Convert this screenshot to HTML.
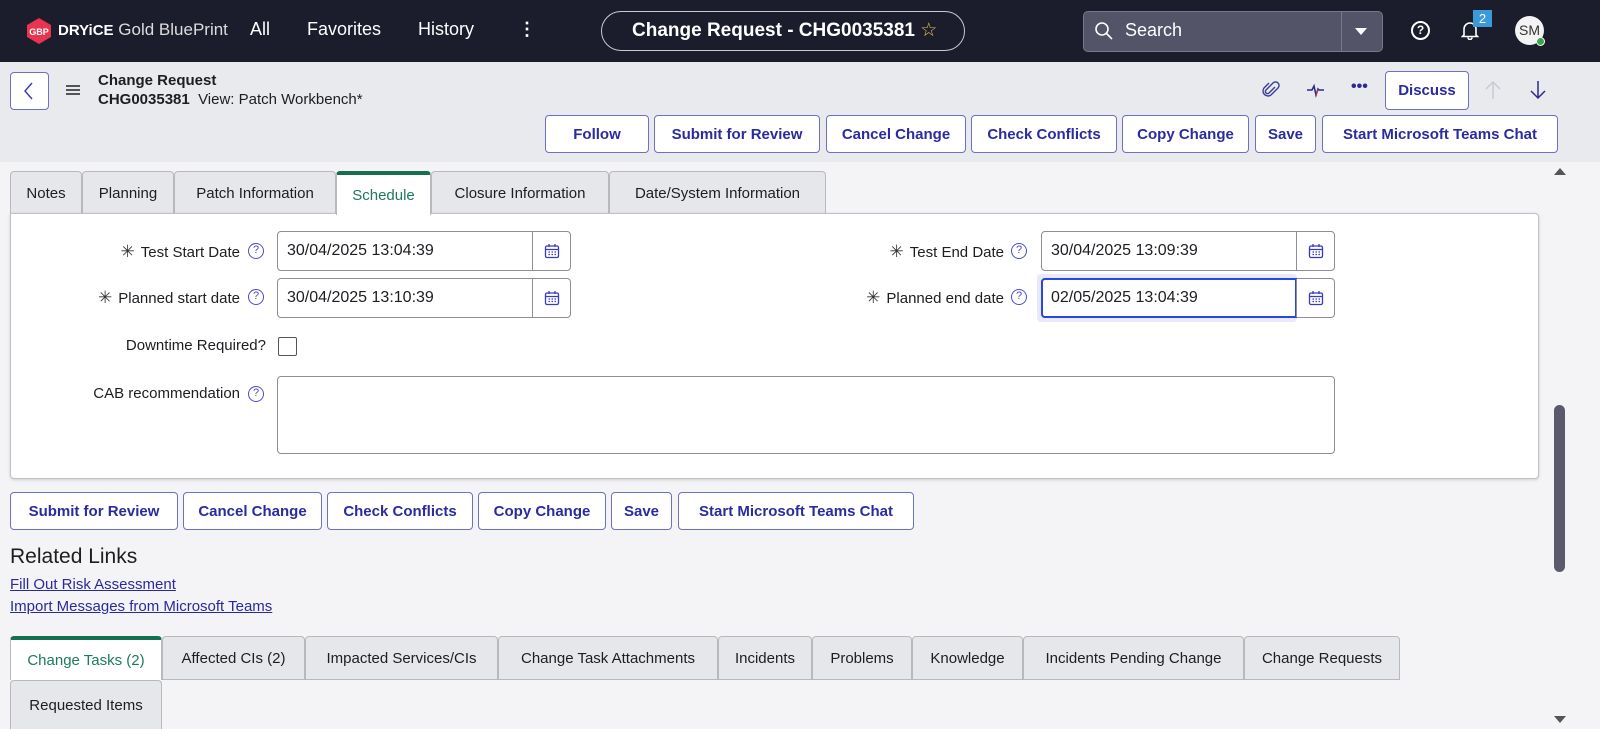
<!DOCTYPE html>
<html><head><meta charset="utf-8">
<style>
*{box-sizing:border-box;margin:0;padding:0}
body{width:1600px;height:729px;overflow:hidden;background:#f4f4f6;font-family:"Liberation Sans",sans-serif;font-size:15px;color:#1d1d22;position:relative}
.abs{position:absolute}
.top{left:0;top:0;width:1600px;height:62px;background:#1b1c2c}
.nav{color:#fff;font-size:18px;top:19px}
.hdr{left:0;top:62px;width:1600px;height:100px;background:#e9eaee}
.btn{position:absolute;height:38px;border:1px solid #6f6fc8;border-radius:4px;background:#fff;color:#2b2ba0;font-weight:bold;font-size:15px;display:flex;align-items:center;justify-content:center;white-space:nowrap}
.tab{position:absolute;height:43px;border:1px solid #b8b9bf;border-bottom:none;border-radius:4px 4px 0 0;background:#e6e7eb;display:flex;align-items:center;justify-content:center;font-size:15px;color:#1d1d22;white-space:nowrap}
.tab.on{background:#fff;color:#1c7a5a;border-top:4px solid #167050}
.lbl{position:absolute;font-size:15px;text-align:right;white-space:nowrap}
.star{color:#333;font-size:17px;margin-right:6px}
.help{position:absolute;width:16px;height:16px;border:1.5px solid #4b4bd0;border-radius:50%;color:#4b4bd0;font-size:11px;line-height:13px;text-align:center}
.inp{position:absolute;height:40px;border:1px solid #8d8e96;border-radius:4px;background:#fff;font-size:16px;padding-left:9px;line-height:38px}
.cal{position:absolute;right:0;top:0;width:38px;height:100%;border-left:1px solid #8d8e96;display:flex;align-items:center;justify-content:center}
a{color:#2a2aa0;text-decoration:underline}
</style></head><body>
<div class="abs top"></div>
<svg class="abs" style="left:25px;top:17px" width="28" height="28" viewBox="0 0 28 28"><polygon points="14,1 26,8 26,20 14,27 2,20 2,8" fill="#e8344e"/><text x="14" y="18" font-size="9" font-weight="bold" fill="#fff" text-anchor="middle" font-family="Liberation Sans">GBP</text></svg>
<div class="abs" style="left:58px;top:20px;color:#fff;font-size:17px;white-space:nowrap"><b style="font-size:15px">DRYiCE</b> <span style="color:#ddd">Gold BluePrint</span></div>
<div class="abs nav" style="left:250px">All</div>
<div class="abs nav" style="left:307px">Favorites</div>
<div class="abs nav" style="left:418px">History</div>
<div class="abs nav" style="left:518px;font-weight:bold">⋮</div>
<div class="abs" style="left:601px;top:11px;width:364px;height:40px;border:1.5px solid #c9c9d2;border-radius:20px;color:#fff;font-size:19px;font-weight:bold;line-height:37px;padding-left:30px;white-space:nowrap">Change Request - CHG0035381 <span style="color:#e8c050;font-weight:normal">☆</span></div>
<div class="abs" style="left:1083px;top:11px;width:300px;height:41px;background:#545469;border:1px solid #77788a;border-radius:5px"></div>
<div class="abs" style="left:1341px;top:12px;width:1px;height:39px;background:#77788a"></div>
<svg class="abs" style="left:1094px;top:21px" width="20" height="20" viewBox="0 0 20 20"><circle cx="8" cy="8" r="6" fill="none" stroke="#fff" stroke-width="1.6"/><path d="M12.5 12.5L18 18" stroke="#fff" stroke-width="1.6"/></svg>
<div class="abs" style="left:1125px;top:20px;color:#fff;font-size:18px">Search</div>
<div class="abs" style="left:1355px;top:28px;width:0;height:0;border-left:6px solid transparent;border-right:6px solid transparent;border-top:7px solid #fff"></div>
<div class="abs" style="left:1411px;top:21px;width:19px;height:19px;border:2px solid #fff;border-radius:50%;color:#fff;font-size:12px;font-weight:bold;text-align:center;line-height:15px">?</div>
<svg class="abs" style="left:1461px;top:20px" width="18" height="20" viewBox="0 0 18 20"><path d="M3 15V9a6 6 0 0112 0v6l1.5 1.5h-15z M7 17.5a2 2 0 004 0" fill="none" stroke="#fff" stroke-width="1.6"/></svg>
<div class="abs" style="left:1473px;top:10px;width:19px;height:17px;background:#3b9ad8;color:#fff;font-size:13px;text-align:center;line-height:17px">2</div>
<div class="abs" style="left:1515px;top:16px;width:29px;height:29px;border-radius:50%;background:#f3f3f3;color:#333;font-size:14px;text-align:center;line-height:29px">SM</div>
<div class="abs" style="left:1536px;top:37px;width:9px;height:9px;border-radius:50%;background:#3aa64a;border:1px solid #fff"></div>

<div class="abs hdr"></div>
<div class="abs" style="left:10px;top:72px;width:39px;height:38px;border:1px solid #6f6fc8;border-radius:4px;background:#fff"></div>
<svg class="abs" style="left:22px;top:81px" width="14" height="20" viewBox="0 0 14 20"><path d="M10 2L3 10l7 8" fill="none" stroke="#3a3aa8" stroke-width="1.4"/></svg>
<svg class="abs" style="left:66px;top:84px" width="14" height="12" viewBox="0 0 14 12"><path d="M0 2h14M0 6h14M0 10h14" stroke="#222" stroke-width="1.5"/></svg>
<div class="abs" style="left:98px;top:72px;font-weight:bold;font-size:15px">Change Request</div>
<div class="abs" style="left:98px;top:91px;font-size:15px;white-space:nowrap"><b>CHG0035381</b>&nbsp; View: Patch Workbench*</div>
<svg class="abs" style="left:1262px;top:80px" width="18" height="20" viewBox="0 0 18 20"><path d="M13 7l-6 6a2 2 0 01-3-3l7-7a3.5 3.5 0 015 5l-7 7a5 5 0 01-7-7l5-5" fill="none" stroke="#3a3a9a" stroke-width="1.4"/></svg>
<svg class="abs" style="left:1306px;top:80px" width="20" height="20" viewBox="0 0 20 20"><path d="M1 10h5l2-4 2 9 2-6 1 1h5" fill="none" stroke="#2a2a90" stroke-width="1.6"/><path d="M10 15l2-6" stroke="#c03040" stroke-width="1.2"/></svg>
<div class="abs" style="left:1351px;top:78px;font-size:16px;font-weight:bold;color:#2a2a90">•••</div>
<div class="btn" style="left:1385px;top:71px;width:84px;height:39px">Discuss</div>
<svg class="abs" style="left:1485px;top:80px" width="16" height="20" viewBox="0 0 16 20"><path d="M8 19V2M1 9l7-7 7 7" fill="none" stroke="#c8c9d3" stroke-width="1.5"/></svg>
<svg class="abs" style="left:1530px;top:80px" width="16" height="20" viewBox="0 0 16 20"><path d="M8 1v17M1 11l7 7 7-7" fill="none" stroke="#2a2a90" stroke-width="1.5"/></svg>
<div class="btn" style="left:545px;top:115px;width:104px">Follow</div>
<div class="btn" style="left:654px;top:115px;width:166px">Submit for Review</div>
<div class="btn" style="left:826px;top:115px;width:140px">Cancel Change</div>
<div class="btn" style="left:971px;top:115px;width:146px">Check Conflicts</div>
<div class="btn" style="left:1122px;top:115px;width:127px">Copy Change</div>
<div class="btn" style="left:1255px;top:115px;width:61px">Save</div>
<div class="btn" style="left:1322px;top:115px;width:236px">Start Microsoft Teams Chat</div>

<div class="tab" style="left:10px;top:171px;width:72px">Notes</div>
<div class="tab" style="left:82px;top:171px;width:92px">Planning</div>
<div class="tab" style="left:174px;top:171px;width:162px">Patch Information</div>
<div class="tab on" style="left:336px;top:171px;width:95px;height:44px;z-index:2">Schedule</div>
<div class="tab" style="left:431px;top:171px;width:178px">Closure Information</div>
<div class="tab" style="left:609px;top:171px;width:217px">Date/System Information</div>
<div class="abs" style="left:10px;top:213px;width:1529px;height:266px;background:#fff;border:1px solid #c0c1c8;border-radius:0 4px 4px 4px;box-shadow:0 1px 3px rgba(0,0,0,.15)"></div>

<div class="lbl" style="right:1360px;top:242px"><span class="star">✳</span>Test Start Date</div>
<div class="help" style="left:248px;top:243px">?</div>
<div class="inp" style="left:277px;top:231px;width:294px">30/04/2025 13:04:39<div class="cal"><svg width="16" height="16" viewBox="0 0 16 16"><rect x="1.5" y="3" width="13" height="11.5" rx="1.5" fill="none" stroke="#3a3ac0" stroke-width="1.3"/><path d="M1.5 6.5h13M5 1v3M11 1v3" stroke="#3a3ac0" stroke-width="1.3"/><path d="M4.5 9h1.5M7.5 9h1.5M10.5 9h1.5M4.5 11.5h1.5M7.5 11.5h1.5M10.5 11.5h1.5" stroke="#3a3ac0" stroke-width="1.3"/></svg></div></div>
<div class="lbl" style="right:1360px;top:288px"><span class="star">✳</span>Planned start date</div>
<div class="help" style="left:248px;top:289px">?</div>
<div class="inp" style="left:277px;top:278px;width:294px">30/04/2025 13:10:39<div class="cal"><svg width="16" height="16" viewBox="0 0 16 16"><rect x="1.5" y="3" width="13" height="11.5" rx="1.5" fill="none" stroke="#3a3ac0" stroke-width="1.3"/><path d="M1.5 6.5h13M5 1v3M11 1v3" stroke="#3a3ac0" stroke-width="1.3"/><path d="M4.5 9h1.5M7.5 9h1.5M10.5 9h1.5M4.5 11.5h1.5M7.5 11.5h1.5M10.5 11.5h1.5" stroke="#3a3ac0" stroke-width="1.3"/></svg></div></div>
<div class="lbl" style="right:1334px;top:337px">Downtime Required?</div>
<div class="abs" style="left:278px;top:337px;width:19px;height:19px;border:1px solid #555;border-radius:2px;background:#fff"></div>
<div class="lbl" style="right:1360px;top:385px">CAB recommendation</div>
<div class="help" style="left:248px;top:386px">?</div>
<div class="abs" style="left:277px;top:376px;width:1058px;height:78px;border:1px solid #8d8e96;border-radius:4px;background:#fff"></div>

<div class="lbl" style="right:596px;top:242px"><span class="star">✳</span>Test End Date</div>
<div class="help" style="left:1011px;top:243px">?</div>
<div class="inp" style="left:1041px;top:231px;width:294px">30/04/2025 13:09:39<div class="cal"><svg width="16" height="16" viewBox="0 0 16 16"><rect x="1.5" y="3" width="13" height="11.5" rx="1.5" fill="none" stroke="#3a3ac0" stroke-width="1.3"/><path d="M1.5 6.5h13M5 1v3M11 1v3" stroke="#3a3ac0" stroke-width="1.3"/><path d="M4.5 9h1.5M7.5 9h1.5M10.5 9h1.5M4.5 11.5h1.5M7.5 11.5h1.5M10.5 11.5h1.5" stroke="#3a3ac0" stroke-width="1.3"/></svg></div></div>
<div class="lbl" style="right:596px;top:288px"><span class="star">✳</span>Planned end date</div>
<div class="help" style="left:1011px;top:289px">?</div>
<div class="abs" style="left:1037px;top:274px;width:260px;height:48px;background:#e8eafc;border-radius:4px"></div>
<div class="inp" style="left:1041px;top:278px;width:294px">
<div class="abs" style="left:-1px;top:-1px;width:256px;height:40px;border:2px solid #2848e0;border-radius:4px 0 0 4px"></div>02/05/2025 13:04:39<div class="cal"><svg width="16" height="16" viewBox="0 0 16 16"><rect x="1.5" y="3" width="13" height="11.5" rx="1.5" fill="none" stroke="#3a3ac0" stroke-width="1.3"/><path d="M1.5 6.5h13M5 1v3M11 1v3" stroke="#3a3ac0" stroke-width="1.3"/><path d="M4.5 9h1.5M7.5 9h1.5M10.5 9h1.5M4.5 11.5h1.5M7.5 11.5h1.5M10.5 11.5h1.5" stroke="#3a3ac0" stroke-width="1.3"/></svg></div></div>

<div class="btn" style="left:10px;top:492px;width:168px">Submit for Review</div>
<div class="btn" style="left:183px;top:492px;width:139px">Cancel Change</div>
<div class="btn" style="left:327px;top:492px;width:146px">Check Conflicts</div>
<div class="btn" style="left:478px;top:492px;width:128px">Copy Change</div>
<div class="btn" style="left:611px;top:492px;width:61px">Save</div>
<div class="btn" style="left:678px;top:492px;width:236px">Start Microsoft Teams Chat</div>
<div class="abs" style="left:10px;top:545px;font-size:21px">Related Links</div>
<div class="abs" style="left:10px;top:576px;font-size:15px"><a>Fill Out Risk Assessment</a></div>
<div class="abs" style="left:10px;top:598px;font-size:15px"><a>Import Messages from Microsoft Teams</a></div>

<div class="tab on" style="left:10px;top:636px;width:152px;height:44px;z-index:2">Change Tasks (2)</div>
<div class="tab" style="left:162px;top:636px;width:143px">Affected CIs (2)</div>
<div class="tab" style="left:305px;top:636px;width:193px">Impacted Services/CIs</div>
<div class="tab" style="left:498px;top:636px;width:220px">Change Task Attachments</div>
<div class="tab" style="left:718px;top:636px;width:94px">Incidents</div>
<div class="tab" style="left:812px;top:636px;width:100px">Problems</div>
<div class="tab" style="left:912px;top:636px;width:111px">Knowledge</div>
<div class="tab" style="left:1023px;top:636px;width:221px">Incidents Pending Change</div>
<div class="tab" style="left:1244px;top:636px;width:156px">Change Requests</div>
<div class="abs" style="left:10px;top:679px;width:1390px;height:1px;background:#b8b9bf"></div>
<div class="tab" style="left:10px;top:680px;width:152px;height:49px;border-radius:4px 4px 0 0">Requested Items</div>

<div class="abs" style="left:1554px;top:168px;width:0;height:0;border-left:6px solid transparent;border-right:6px solid transparent;border-bottom:7px solid #555"></div>
<div class="abs" style="left:1554px;top:405px;width:11px;height:167px;background:#5a5a6c;border-radius:6px"></div>
<div class="abs" style="left:1554px;top:716px;width:0;height:0;border-left:6px solid transparent;border-right:6px solid transparent;border-top:7px solid #555"></div>
</body></html>
